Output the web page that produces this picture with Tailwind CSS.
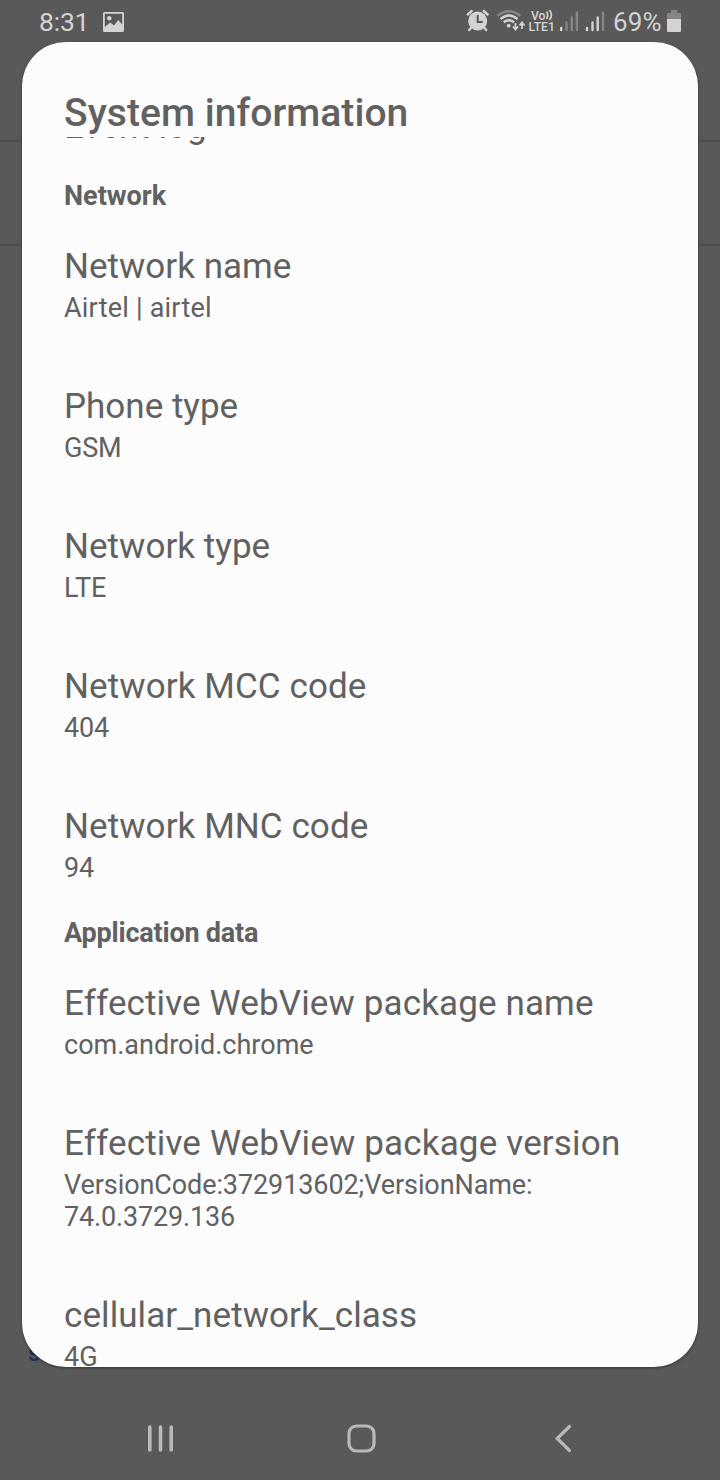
<!DOCTYPE html>
<html lang="en">
<head>
<meta charset="utf-8">
<title>System information</title>
<script src="https://cdn.jsdelivr.net/npm/@tailwindcss/browser@4"></script>
</head>
<body class="bg-[#595959] font-['Roboto',sans-serif] text-[#616161]">
<div class="relative w-[720px] h-[1480px] overflow-hidden flex flex-col">
  <div class="absolute left-0 top-[140px] w-full h-[2px] bg-[#4f4f4f]"></div>
  <div class="absolute left-0 top-[244px] w-full h-[2px] bg-[#4f4f4f]"></div>
  <div class="absolute left-[28px] top-[1339px] text-[24px] leading-[28px] font-medium text-[#1b2f57]">s</div>

  <header class="h-[42px] shrink-0 flex items-center pl-[39px] text-[#d3d3d3]">
    <span class="w-[64px] pt-[2px] text-[26.5px] leading-[42px] tracking-[-0.2px]"><span>8:31</span></span>
    <svg class="mt-[2px] w-[22px] h-[20px]" viewBox="0 0 22 20"><path fill="currentColor" fill-rule="evenodd" d="M1.500 0h18a1.500 1.500 0 0 1 1.500 1.500v17a1.500 1.500 0 0 1-1.500 1.500H1.500A1.500 1.500 0 0 1 0 18.500V1.500A1.500 1.500 0 0 1 1.500 0ZM1.800 1.800v13.200l5.400-4.500 3.800 3L15.200 8l4 4.500V1.800Z"/><circle cx="6.300" cy="6.200" r="2.300" fill="currentColor"/></svg>
    <svg class="ml-[341px] w-[140px] h-[42px] shrink-0" viewBox="466 0 140 42">
      <g fill="none" stroke="currentColor" stroke-width="2.400" stroke-linecap="round">
        <path d="M467.700 14.500l4-3.500M483.700 11l4 3.500M471.700 27l-2.500 3M483.700 27l2.500 3"/>
      </g>
      <circle cx="477.700" cy="21" r="9.500" fill="currentColor"/>
      <path d="M477.700 15v7h5" fill="none" stroke="#595959" stroke-width="2"/>
      <g fill="none" stroke="currentColor" stroke-width="2.400">
        <path stroke="#868686" d="M497.500 15.800Q509 6.500 520.500 15.800"/>
        <path d="M500.500 19Q509 12 517.500 19"/>
        <path d="M503.700 22.300Q509 18 514 22.300"/>
      </g>
      <circle cx="508.700" cy="25.700" r="1.900" fill="currentColor"/>
      <path d="M515.500 23v6M513 26.500l2.500 3 2.500-3M522 29v-6M519.500 25.500l2.500-3 2.500 3" fill="none" stroke="currentColor" stroke-width="1.800"/>
      <g fill="currentColor" class="font-medium">
        <text x="531" y="19.500" font-size="13" textLength="14.500" lengthAdjust="spacingAndGlyphs">Vo</text>
        <text x="528.500" y="31" font-size="13" textLength="26.500" lengthAdjust="spacingAndGlyphs">LTE1</text>
      </g>
      <path d="M546.500 11.500q2.500 3.800 0 7.500M549.500 10q3.800 5 0 10" fill="none" stroke="currentColor" stroke-width="1.700"/>
      <g stroke-width="2.400" stroke-linecap="round">
        <path stroke="#d3d3d3" d="M561.200 28v2M587 28v2M592.500 22.500v7.500M597.700 17.500v12.500"/>
        <path stroke="#868686" d="M566.500 22.500v7.500M571.800 17.500v12.500M576.900 12.500v17.500M603 12.500v17.500"/>
      </g>
    </svg>
    <span class="ml-[7px] w-[54px] pt-[2px] text-[26px] leading-[42px] tracking-[0.2px]"><span>69%</span></span>
    <svg class="w-[14px] h-[22px] shrink-0" viewBox="0 0 14 22"><path fill="#868686" d="M4 0h6v3h3q1 0 1 1v6H0V4q0-1 1-1h3Z"/><path fill="currentColor" d="M0 9h14v12q0 1-1 1H1q-1 0-1-1Z"/></svg>
  </header>

  <main class="relative mx-[22px] h-[1325px] shrink-0 rounded-[44px] bg-[#fcfcfc] overflow-hidden shadow-[0_1px_3px_rgba(0,0,0,0.4)] flex flex-col">
    <h1 class="h-[95px] shrink-0 pl-[42px] pt-[47px] text-[39px] leading-[48px] font-medium tracking-[0.05px] whitespace-nowrap"><span>System information</span></h1>
    <div class="h-[1230px] overflow-hidden pl-[42px] whitespace-nowrap">
      <div class="-mt-[31px] h-[74px] text-[35px] leading-[42px] tracking-[0.05px]"><span>Event log</span></div>
      <h2 class="h-[66px] text-[27px] leading-[32px] font-bold"><span>Network</span></h2>
      <section class="h-[140px]"><h3 class="h-[46px] text-[35px] leading-[42px] tracking-[0.02px]"><span>Network name</span></h3><p class="text-[27px] leading-[32px] tracking-[0.22px]"><span>Airtel | airtel</span></p></section>
      <section class="h-[140px]"><h3 class="h-[46px] text-[35px] leading-[42px]"><span>Phone type</span></h3><p class="text-[27px] leading-[32px] tracking-[-0.2px]"><span>GSM</span></p></section>
      <section class="h-[140px]"><h3 class="h-[46px] text-[35px] leading-[42px] tracking-[0.04px]"><span>Network type</span></h3><p class="text-[27px] leading-[32px]"><span>LTE</span></p></section>
      <section class="h-[140px]"><h3 class="h-[46px] text-[35px] leading-[42px] tracking-[0.1px]"><span>Network MCC code</span></h3><p class="text-[27px] leading-[32px] tracking-[-0.2px]"><span>404</span></p></section>
      <section class="h-[111px]"><h3 class="h-[46px] text-[35px] leading-[42px] tracking-[0.08px]"><span>Network MNC code</span></h3><p class="text-[27px] leading-[32px] tracking-[-0.2px]"><span>94</span></p></section>
      <h2 class="mt-[-40px] pt-[40px] h-[106px] text-[27px] leading-[32px] font-bold tracking-[-0.2px]"><span>Application data</span></h2>
      <section class="h-[140px]"><h3 class="h-[46px] text-[35px] leading-[42px] tracking-[0.13px]"><span>Effective WebView package name</span></h3><p class="text-[27px] leading-[32px]"><span>com.android.chrome</span></p></section>
      <section class="h-[172px]"><h3 class="h-[46px] text-[35px] leading-[42px] tracking-[0.16px]"><span>Effective WebView package version</span></h3><p class="text-[27px] leading-[32px] tracking-[-0.09px]"><span>VersionCode:372913602;VersionName:</span><br><span class="tracking-[-0.17px]">74.0.3729.136</span></p></section>
      <section class="h-[140px]"><h3 class="h-[46px] text-[35px] leading-[42px] tracking-[0.08px]"><span>cellular_network_class</span></h3><p class="text-[27px] leading-[32px]"><span>4G</span></p></section>
    </div>
  </main>

  <nav class="h-[113px] shrink-0 pt-[56px] pl-[147px]">
    <svg class="w-[426px] h-[32px]" viewBox="147 1423 426 32" fill="none" stroke="#b9b9b9" stroke-linecap="round">
      <path stroke-width="3.600" d="M149.800 1427v23M160.500 1427v23M171.200 1427v23"/>
      <rect x="349" y="1426" width="25" height="25" rx="7.500" stroke-width="3.200"/>
      <path stroke-width="3.200" d="M569.500 1426.500l-12.300 12 12.300 12"/>
    </svg>
  </nav>
</div>
</body>
</html>
